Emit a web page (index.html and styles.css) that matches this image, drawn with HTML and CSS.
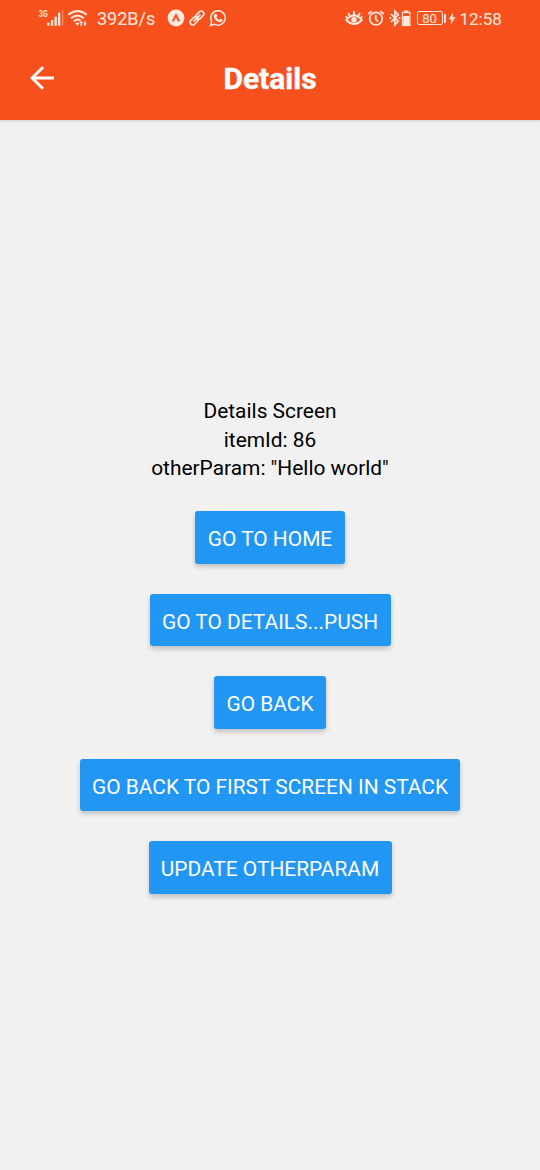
FILE: index.html
```html
<!DOCTYPE html>
<html lang="en">
<head>
<meta charset="utf-8">
<title>Details</title>
<link rel="stylesheet" href="styles.css">
</head>
<body>
<header class="header">
  <div class="status">
    <div class="status-side">
      <svg class="signal" width="26" height="20" viewBox="38 8 26 20">
        <text class="network" x="39" y="17" textLength="8.5" lengthAdjust="spacingAndGlyphs">3G</text>
        <path fill="currentColor" d="M47.2 22.7h2.3v3.1h-2.3zM50.9 20h2.3v5.8h-2.3zM54.5 16.7h2.3v9.1h-2.3zM58 12.7h2.3v13.1H58z"/>
        <path fill="currentColor" opacity=".35" d="M62 10.5h1.3v15.3H62z"/>
      </svg>
      <svg class="wifi" width="22" height="20" viewBox="67 8 22 20" fill="none" stroke="currentColor" stroke-width="1.9">
        <path d="M68.3 14.8Q77.5 7.2 86.8 14.8M71 18.2Q77.5 12.6 84 18.2M73.8 21.4Q77.5 18.2 80.5 20.6"/>
        <path fill="currentColor" stroke="none" d="M75.4 23.3q2-1.8 4 0l-2 2.5zM81.2 20.5l2 2.6h-1.3v3h-1.4v-3h-1.3zM85 26.2l-2-2.6h1.3v-2.4h1.4v2.4H87z"/>
      </svg>
      <span class="speed">392B/s</span>
      <svg class="expo" width="18" height="18" viewBox="0 0 18 18">
        <circle cx="9" cy="9" r="8.4" fill="currentColor"/>
        <path class="cutout" d="M5.8 12.4L9 6.2l3.2 6.2"/>
      </svg>
      <svg class="link" width="16" height="18" viewBox="0 0 16 18" fill="none" stroke="currentColor" stroke-width="1.6" stroke-linecap="round">
        <g transform="rotate(-45 8 9)"><rect x="-.6" y="6.4" width="9.4" height="5.2" rx="2.6"/><rect x="7.2" y="6.4" width="9.4" height="5.2" rx="2.6"/><path d="M4 9h8"/></g>
      </svg>
      <svg class="whatsapp" width="18" height="18" viewBox="0 0 18 18" fill="none" stroke="currentColor" stroke-width="1.5">
        <path d="M1.5 16.5l1.2-4.1a7.2 7.2 0 1 1 2.8 2.8z"/>
        <path fill="currentColor" stroke="none" d="M6.2 4.8h1.1l1 2.3-.9 1.2c.7 1.3 1.6 2.1 2.9 2.7l1.1-1.3 2.2 1.1c.1 1.5-1 2.4-2.3 2.4-3.4-.2-6.5-3.5-6.5-6.3 0-1 .6-1.9 1.4-2.1z"/>
      </svg>
    </div>
    <div class="status-side">
      <svg class="eye" width="18" height="18" viewBox="0 0 18 18" fill="none" stroke="currentColor" stroke-width="1.9">
        <path d="M1.2 11q7.8-9 15.6 0q-7.8 8-15.6 0z"/><path d="M9 2v4M3.1 4l1.8 3M14.9 4l-1.8 3M.6 7.6l2 1.5M17.4 7.6l-2 1.5"/>
        <circle cx="9" cy="10.7" r="2.8" fill="currentColor" stroke="none"/>
      </svg>
      <svg class="alarm" width="18" height="18" viewBox="0 0 18 18" fill="none" stroke="currentColor" stroke-width="1.7">
        <circle cx="9" cy="9.7" r="6.3"/><path d="M8.7 5.8v4.3l2.5 2.5M1.4 5l3.2-2.9M16.6 5l-3.2-2.9"/>
      </svg>
      <svg class="bluetooth" width="22" height="18" viewBox="0 0 22 18">
        <path fill="none" stroke="currentColor" stroke-width="1.7" d="M2 5l7.3 7.2-3.5 3.6V2.2l3.5 3.6L2 13"/>
        <path fill="currentColor" d="M.4 8.1h1.8v1.8H.4zM9.6 8.1h1.8v1.8H9.6zM15 1.5h4.4v1.4H15z"/>
        <rect x="13.5" y="3.5" width="7.4" height="13" fill="none" stroke="currentColor" stroke-width="1.2"/>
        <path fill="currentColor" d="M14.3 7h5.8v9h-5.8z"/>
      </svg>
      <span class="battery">80</span>
      <svg class="charge" width="12" height="18" viewBox="0 0 12 18" fill="currentColor">
        <path d="M0 5.2h2v8.5H0zM8.9 3.8L4.8 10.2h2.6l-.8 5.2 4.9-7.1H8.7z"/>
      </svg>
      <span class="clock">12:58</span>
    </div>
  </div>
  <div class="toolbar">
    <svg class="back" width="24" height="24" viewBox="0 0 24 24" fill="none" stroke="currentColor" stroke-width="2.9">
      <path d="M24 12H2M13 1.2L2.1 12 13 22.8"/>
    </svg>
    <h1 class="title">Details</h1>
  </div>
</header>
<main class="content">
  <p class="line">Details Screen</p>
  <p class="line">itemId: 86</p>
  <p class="line">otherParam: "Hello world"</p>
  <div class="actions">
    <button class="button home">Go to Home</button>
    <button class="button push">Go to Details...push</button>
    <button class="button return">Go back</button>
    <button class="button first">Go back to first screen in stack</button>
    <button class="button update">Update otherParam</button>
  </div>
</main>
</body>
</html>
```
FILE: styles.css
```css
* { box-sizing: border-box; }
body {
  margin: 0;
  min-height: 1170px;
  background: #f1f1f1;
  color: #000;
  font-family: Roboto, "Liberation Sans", sans-serif;
}
svg { display: block; flex: none; }
.header {
  height: 120px;
  background: #f6511d;
  color: #fff;
  box-shadow: 0 1px 3px rgba(0, 0, 0, .15);
}
.status {
  display: flex;
  justify-content: space-between;
  height: 36px;
  padding: 0 38px;
  color: #ffe9df;
}
.status-side { display: flex; align-items: center; }
.network { font-size: 9px; font-weight: 700; fill: currentColor; }
.wifi { margin-left: 3px; }
.speed { width: 60px; margin-left: 8px; font-size: 18px; line-height: 36px; padding-top: 1px; white-space: nowrap; }
.expo { margin-left: 9.5px; }
.cutout { fill: none; stroke: #f6511d; stroke-width: 2; }
.link { margin-left: 4px; }
.whatsapp { margin-left: 4px; }
.alarm { margin-left: 4.5px; }
.bluetooth { margin-left: 4px; }
.battery {
  width: 26px;
  height: 14px;
  margin-left: 5.5px;
  border: 1px solid currentColor;
  border-radius: 2px;
  font-size: 13px;
  line-height: 13px;
  text-align: center;
}
.charge { margin-left: 1px; }
.clock { width: 42.5px; margin-left: 4px; font-size: 17px; line-height: 36px; padding-top: 1px; white-space: nowrap; }
.toolbar {
  display: grid;
  grid-template-columns: 60px 1fr 60px;
  align-items: center;
  height: 84px;
}
.back { margin: 0 0 0 30px; }
.title { margin: 2px 0 0; font-size: 30px; line-height: 40px; text-align: center; -webkit-text-stroke: .4px currentColor; }
.content {
  display: flex;
  flex-direction: column;
  align-items: center;
  padding-top: 277.2px;
}
.line { margin: 0; font-size: 20.9px; line-height: 28.5px; }
.actions {
  display: flex;
  flex-direction: column;
  align-items: center;
  gap: 30px;
  padding-top: 28.7px;
}
.button {
  height: 52.5px;
  padding: 3px 0 0;
  border: 0;
  border-radius: 3px;
  background: #2196f3;
  box-shadow: 0 3px 5px rgba(0, 0, 0, .2);
  color: #fff;
  font: 20.9px Roboto, "Liberation Sans", sans-serif;
  text-transform: uppercase;
  white-space: nowrap;
}
.home { width: 150px; }
.push { width: 241px; }
.return { width: 112px; }
.first { width: 380px; }
.update { width: 243px; }
```
